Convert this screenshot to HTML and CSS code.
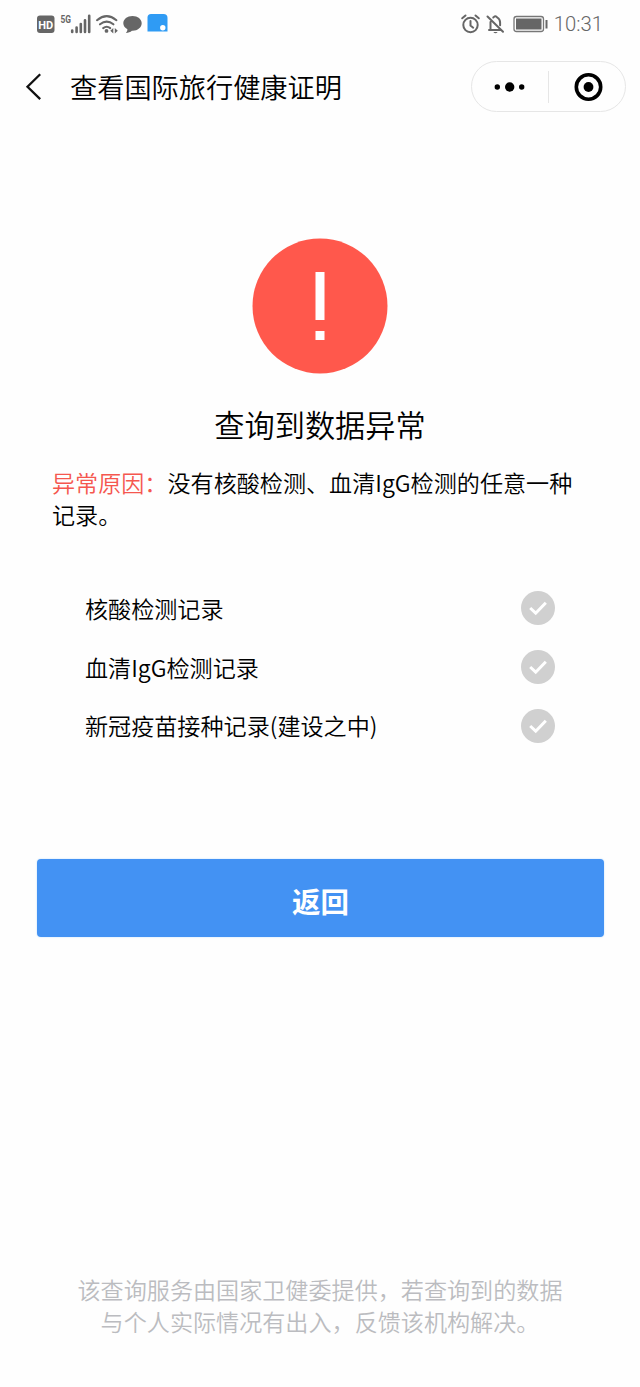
FILE: index.html
```html
<!DOCTYPE html>
<html lang="zh-CN">
<head>
    <meta charset="UTF-8">
    <meta name="viewport" content="width=device-width, initial-scale=1.0">
    <title>查看国际旅行健康证明</title>
    <link rel="stylesheet" href="styles.css">
</head>
<body>

    <div class="status-bar">
        <svg class="status-icons" width="134" height="24" viewBox="0 0 134 24">
            <rect x="1" y="3.5" width="17.5" height="17.5" rx="3" fill="#666"/>
            <text x="9.8" y="16.6" class="hd-text" text-anchor="middle">HD</text>
            <text x="24.5" y="11" class="net-text" textLength="10.5" lengthAdjust="spacingAndGlyphs">5G</text>
            <path d="M36.2 18.5v1.5M40.6 15.5v4.5M44.8 12v8M49 8.2v11.8M53.2 3.8v16.2" stroke="#666" stroke-width="2.6" stroke-linecap="round"/>
            <path d="M61 8.2q9.7-8 19.4 0M64 12.3q6.7-5.4 13.4 0M67.2 16.1q3.5-2.7 7 0" fill="none" stroke="#666" stroke-width="2.1" stroke-linecap="round"/>
            <circle cx="70.5" cy="18.9" r="1.9" fill="#666"/>
            <path d="M77.3 16v5.4l-3-2.7zM78.8 16v5.4l3-2.7z" fill="#666"/>
            <path d="M96.500 4c5.200 0 9.200 3.200 9.200 7.300 0 4.600-4.700 7.800-9.800 7.400-1.500 1.300-3.700 2.200-6 2.200 1-1.100 1.500-2.200 1.500-3.700-2.500-1.300-4.100-3.400-4.100-5.900C87.300 7.200 91.300 4 96.500 4z" fill="#666"/>
            <path d="M115 2h12.5q4 0 4 4v13.5H111.500V5.5q0-3.500 3.500-3.500z" fill="#2f9bf4"/>
            <circle cx="126.8" cy="15.7" r="2.7" fill="#fff"/>
        </svg>
        <div class="status-right">
            <svg width="86" height="24" viewBox="0 0 86 24">
                <g fill="none" stroke="#666" stroke-width="2" stroke-linecap="round">
                    <circle cx="9.500" cy="13" r="7.2"/>
                    <path d="M9.500 9v4.500l2.700 2.200M1.200 6.300l3.300-2.800M17.800 6.300l-3.300-2.800"/>
                    <path d="M26.500 4.500l15.500 15.300M28 18h11.500M29.500 18V10M32.300 5.500c.7-.3 1-1.300 2-1.300 1.100 0 1.300 1 2 1.300 1.800 1 2.800 2.700 2.800 5v2.700"/>
                </g>
                <path d="M32.300 20h4.400q-2.200 2.400-4.400 0z" fill="#666"/>
                <rect x="53" y="4.500" width="29.500" height="15" rx="2.500" fill="none" stroke="#777" stroke-width="1.300"/>
                <rect x="55" y="6.500" width="25.500" height="11" fill="#666"/>
                <path d="M85.500 8v8.500" stroke="#666" stroke-width="2"/>
            </svg>
            <span class="clock">10:31</span>
        </div>
    </div>

    <div class="nav-bar">
        <svg class="back-icon" width="18" height="28" viewBox="0 0 18 28">
            <path d="M15.2 1.300L2.500 13.700l12.700 12.400" fill="none" stroke="#111" stroke-width="2.3"/>
        </svg>
        <div class="nav-title">查看国际旅行健康证明</div>
        <div class="capsule">
            <svg class="capsule-btn" width="76" height="48" viewBox="0 0 76 48">
                <circle cx="25.3" cy="24" r="2.7"/>
                <circle cx="37.7" cy="24" r="4.7"/>
                <circle cx="49.7" cy="24" r="2.7"/>
            </svg>
            <div class="capsule-line"></div>
            <svg class="capsule-btn" width="76" height="48" viewBox="0 0 76 48">
                <circle cx="39.5" cy="24" r="12.2" fill="none" stroke="#000" stroke-width="3.6"/>
                <circle cx="39.5" cy="24" r="4.9"/>
            </svg>
        </div>
    </div>

    <div class="result">
        <svg class="warn-icon" width="136" height="136" viewBox="0 0 136 136">
            <circle cx="68" cy="68" r="67.5" fill="#ff584c"/>
            <path d="M63.5 34h9v48h-9zM63.5 93h9v9h-9z" fill="#fff"/>
        </svg>
        <div class="result-title">查询到数据异常</div>
        <p class="reason"><span class="reason-label">异常原因：</span>没有核酸检测、血清IgG检测的任意一种记录。</p>
    </div>

    <ul class="record-list">
        <li>
            <span>核酸检测记录</span>
            <svg class="check" viewBox="0 0 34 34">
                <circle cx="17" cy="17" r="17"/>
                <path d="M9.2 17l5.5 5.2L24.8 11.7"/>
            </svg>
        </li>
        <li>
            <span>血清IgG检测记录</span>
            <svg class="check" viewBox="0 0 34 34">
                <circle cx="17" cy="17" r="17"/>
                <path d="M9.2 17l5.5 5.2L24.8 11.7"/>
            </svg>
        </li>
        <li>
            <span>新冠疫苗接种记录(建设之中)</span>
            <svg class="check" viewBox="0 0 34 34">
                <circle cx="17" cy="17" r="17"/>
                <path d="M9.2 17l5.5 5.2L24.8 11.7"/>
            </svg>
        </li>
    </ul>

    <button type="button" class="return-btn">返回</button>

    <div class="footer">该查询服务由国家卫健委提供，若查询到的数据<br>与个人实际情况有出入，反馈该机构解决。</div>

</body>
</html>
```
FILE: styles.css
```css
* {
    box-sizing: border-box;
}

body {
    margin: 0;
    min-height: 1387px;
    display: flex;
    flex-direction: column;
    background: #fefefe;
    color: #000;
    font-family: "Noto Sans CJK SC", sans-serif;
    font-size: 23.1px;
    font-weight: 350;
}

svg {
    display: block;
    flex-shrink: 0;
    overflow: visible;
}

.status-bar {
    height: 48px;
    padding: 0 37px 0 36px;
    display: flex;
    justify-content: space-between;
    align-items: center;
}

.status-right {
    display: flex;
    align-items: center;
    gap: 7px;
}

.hd-text {
    font: bold 11px Roboto, sans-serif;
    fill: #fff;
}

.net-text {
    font: bold 10px Roboto, sans-serif;
    fill: #666;
}

.clock {
    font-family: Roboto, sans-serif;
    font-size: 20.3px;
    line-height: 24px;
    color: #666;
}

.nav-bar {
    height: 77px;
    padding: 0 14px 0 25px;
    display: flex;
    align-items: center;
}

.nav-title {
    flex: 1;
    margin-left: 27px;
    padding-bottom: 2px;
    font-size: 27.2px;
    line-height: 40px;
}

.capsule {
    width: 155px;
    height: 51px;
    display: flex;
    align-items: center;
    border: 1px solid #e6e6e6;
    border-radius: 26px;
}

.capsule-line {
    width: 1px;
    height: 32px;
    background: #e6e6e6;
}

.result {
    padding: 113px 52px 0;
}

.warn-icon {
    margin: 0 auto;
}

.result-title {
    margin-top: 28px;
    font-size: 30.2px;
    line-height: 44px;
    text-align: center;
}

.reason {
    margin: 20px 0 0;
    line-height: 32px;
}

.reason-label {
    color: #f5574f;
}

.record-list {
    list-style: none;
    margin: 49px 85px 0;
    padding: 0;
}

.record-list li {
    height: 58.7px;
    display: flex;
    justify-content: space-between;
    align-items: center;
}

.record-list span {
    line-height: 32px;
    padding-bottom: 1px;
}

.check {
    width: 34px;
    height: 34px;
    fill: #d0d0d0;
}

.check path {
    fill: none;
    stroke: #fff;
    stroke-width: 3;
}

.return-btn {
    height: 78px;
    margin: 104px 36px 0 37px;
    padding: 4px 0 0;
    border: none;
    border-radius: 4px;
    background: #4392f3;
    box-shadow: 0 0 2px #b9dcff;
    color: #fff;
    font-family: inherit;
    font-size: 28.5px;
    font-weight: bold;
}

.footer {
    margin-top: auto;
    padding-bottom: 50px;
    color: #bbbcc0;
    line-height: 32px;
    text-align: center;
}
```
